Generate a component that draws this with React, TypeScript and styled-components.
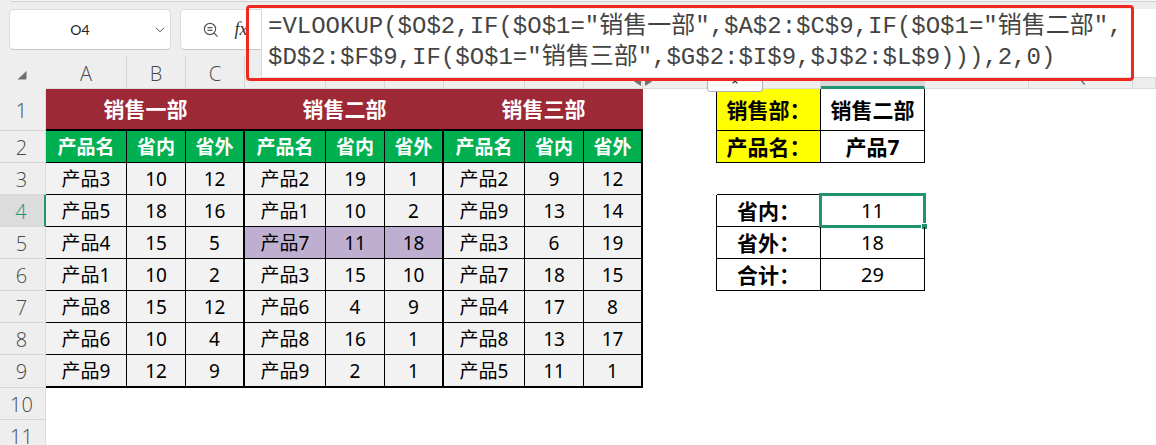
import React from "react";
import styled, { createGlobalStyle, css } from "styled-components";

const GlobalStyle = createGlobalStyle`
  *, *::before, *::after { box-sizing: border-box; }
  body {
    margin: 0;
    background: #ffffff;
    font-family: "Noto Sans", "Noto Sans CJK SC", sans-serif;
    color: #000000;
  }
`;

const chrome = "#eeeeee";
const accent = "#1f9470";

const Workbook = styled.main`
  position: relative;
  height: 100vh;
  overflow: hidden;
`;

const Toolbar = styled.header`
  display: flex;
  flex-direction: column;
  gap: 7px;
  height: 56px;
  background: ${chrome};
`;

const RibbonEdge = styled.div`
  flex: none;
  height: 2px;
  margin-left: 10px;
  background: #f6f6f6;
  border-bottom: 1px solid #cfcfcf;
  border-bottom-left-radius: 4px;
`;

const FormulaRow = styled.div`
  display: flex;
  gap: 9px;
  height: 41px;
  padding-left: 9px;
`;

const Box = styled.div<{ $grow?: boolean }>`
  display: flex;
  align-items: center;
  min-width: 0;
  flex: ${(p) => (p.$grow ? "1" : "0 0 162px")};
  background: #ffffff;
  border: 1px solid #dcdcdc;
  border-bottom-color: #c4c4c4;
  border-radius: ${(p) => (p.$grow ? "5px 0 0 5px" : "5px")};
`;

const NameInput = styled.input`
  flex: 1;
  min-width: 0;
  padding: 0;
  border: 0;
  outline: 0;
  background: transparent;
  text-align: center;
  font: 14px Lato, sans-serif;
  color: #222222;
`;

const IconButton = styled.button`
  display: flex;
  flex: none;
  align-items: center;
  justify-content: center;
  width: 20px;
  height: 20px;
  padding: 0;
  border: 0;
  background: transparent;
  color: #555555;
`;

const FormulaTools = styled.div`
  display: flex;
  gap: 10px;
  padding-left: 20px;
`;

const FxButton = styled(IconButton)`
  font: italic 18px "Liberation Serif", serif;
  color: #333333;
`;

const Editor = styled.div`
  position: absolute;
  z-index: 2;
  top: 9px;
  left: 261px;
  right: 0;
  height: 69px;
  background: #ffffff;
  border-left: 1px solid #d8d8d8;
  border-bottom: 1px solid #d8d8d8;
`;

const FormulaInput = styled.textarea`
  display: block;
  width: 100%;
  height: 68px;
  padding: 2px 0 0 6px;
  border: 0;
  outline: 0;
  resize: none;
  overflow: hidden;
  white-space: pre;
  background: transparent;
  font: 24px/31px "Liberation Mono", "Noto Sans CJK SC", monospace;
  color: #444444;
`;

const Highlight = styled.div`
  position: absolute;
  z-index: 3;
  top: 5px;
  left: 246px;
  width: 888px;
  height: 76px;
  border: 3px solid #ee2a20;
  border-radius: 4px;
  pointer-events: none;
`;

const CollapseTab = styled.button`
  position: absolute;
  z-index: 1;
  top: 72px;
  left: 707px;
  width: 56px;
  height: 20px;
  padding: 7px 0 0;
  display: flex;
  justify-content: center;
  border: 1px solid #b0b0b8;
  border-radius: 3px;
  background: #fafafa;
  color: #333333;
`;

const HiddenMark = styled.svg`
  position: absolute;
  top: 20px;
  right: -10px;
  z-index: 1;
`;

const Sheet = styled.table`
  width: 100%;
  min-width: 1134px;
  table-layout: fixed;
  border-collapse: separate;
  border-spacing: 0;
`;

const Col = styled.col<{ $w?: number }>`
  width: ${(p) => (p.$w ? `${p.$w}px` : "auto")};
`;

const Row = styled.tr<{ $h: number }>`
  height: ${(p) => p.$h}px;
`;

const headText = css`
  font-family: "Open Sans", sans-serif;
  font-weight: 300;
  font-size: 20px;
  line-height: 24px;
  color: #484848;
`;

const ColHead = styled.th<{ $active?: boolean }>`
  ${headText}
  position: relative;
  padding: 4px 0 0;
  background: ${(p) => (p.$active ? "#d9d9d9" : chrome)};
  border-right: 1px solid #d6d6d6;
  border-bottom: ${(p) => (p.$active ? `3px solid ${accent}` : "1px solid #dcdcdc")};
`;

const Corner = styled.th`
  padding: 0;
  background: ${chrome};
`;

const CornerMark = styled.svg`
  display: block;
  margin: 4px 0 0 17px;
`;

const RowHead = styled.th<{ $active?: boolean }>`
  ${headText}
  padding: 2px 2px 0 0;
  background: ${(p) => (p.$active ? "#dcdcdc" : chrome)};
  color: ${(p) => (p.$active ? accent : "#484848")};
  border-right: ${(p) => (p.$active ? `2px solid ${accent}` : "1px solid #dcdcdc")};
  border-bottom: 1px solid #d6d6d6;
`;

type Tone = "title" | "head" | "data" | "marked" | "label" | "key" | "value" | "blank";

const tones = {
  title: css`background: #9d2836; color: #ffffff; font-weight: 700; font-size: 21px;`,
  head: css`background: #00b050; color: #ffffff; font-weight: 700;`,
  data: css`background: #f2f2f2;`,
  marked: css`background: #beafd0;`,
  label: css`background: #ffff00; font-weight: 700; font-size: 21px;`,
  key: css`font-weight: 700; font-size: 21px;`,
  value: css`font-size: 20px;`,
  blank: css``,
};

const Cell = styled.td<{ $tone: Tone; $right?: number; $bottom?: number }>`
  position: relative;
  padding: 0;
  text-align: center;
  white-space: nowrap;
  font-size: 19px;
  line-height: 24px;
  border: 0 solid #000000;
  border-right-width: ${(p) => p.$right ?? 0}px;
  border-bottom-width: ${(p) => p.$bottom ?? 0}px;
  ${(p) => tones[p.$tone]}
`;

const Selection = styled.span`
  position: absolute;
  inset: -2px;
  border: 3px solid ${accent};

  &::after {
    content: "";
    position: absolute;
    right: -4px;
    bottom: -4px;
    width: 6px;
    height: 6px;
    background: ${accent};
    border: solid #ffffff;
    border-width: 1px 0 0 1px;
  }
`;

const widths = [46, 81, 59, 59, 81, 59, 59, 81, 59, 59, 74, 104, 104, 104, 104];
const letters = ["A", "B", "C", "D", "E", "F", "G", "H", "I", "M", "N", "O", "P", "Q", ""];
const departments = ["销售一部", "销售二部", "销售三部"];

const products: [number, number, number][][] = [
  [[3, 10, 12], [2, 19, 1], [2, 9, 12]],
  [[5, 18, 16], [1, 10, 2], [9, 13, 14]],
  [[4, 15, 5], [7, 11, 18], [3, 6, 19]],
  [[1, 10, 2], [3, 15, 10], [7, 18, 15]],
  [[8, 15, 12], [6, 4, 9], [4, 17, 8]],
  [[6, 10, 4], [8, 16, 1], [8, 13, 17]],
  [[9, 12, 9], [9, 2, 1], [5, 11, 1]],
];

const side: Record<number, { tone: Tone; label: string; value: string }> = {
  1: { tone: "label", label: "销售部：", value: "销售二部" },
  2: { tone: "label", label: "产品名：", value: "产品7" },
  4: { tone: "key", label: "省内：", value: "11" },
  5: { tone: "key", label: "省外：", value: "18" },
  6: { tone: "key", label: "合计：", value: "29" },
};

const formula =
  '=VLOOKUP($O$2,IF($O$1="销售一部",$A$2:$C$9,IF($O$1="销售二部",\n' +
  '$D$2:$F$9,IF($O$1="销售三部",$G$2:$I$9,$J$2:$L$9))),2,0)';

function SideCells({ row }: { row: number }) {
  const entry = side[row];
  if (!entry) {
    const line = row === 3 ? 1 : 0;
    return (
      <>
        <Cell $tone="blank" />
        <Cell $tone="blank" $bottom={line} />
        <Cell $tone="blank" $bottom={line} />
        <Cell $tone="blank" colSpan={3} />
      </>
    );
  }
  return (
    <>
      <Cell $tone="blank" $right={1} />
      <Cell $tone={entry.tone} $right={1} $bottom={1}>{entry.label}</Cell>
      <Cell $tone={row < 3 ? "key" : "value"} $right={1} $bottom={1}>
        {entry.value}
        {row === 4 && <Selection />}
      </Cell>
      <Cell $tone="blank" colSpan={3} />
    </>
  );
}

export default function App() {
  return (
    <Workbook>
      <GlobalStyle />
      <Toolbar>
        <RibbonEdge />
        <FormulaRow>
          <Box>
            <NameInput aria-label="名称框" defaultValue="O4" />
            <IconButton aria-label="展开名称列表">
              <svg width="10" height="6" viewBox="0 0 10 6" fill="none" stroke="currentColor">
                <path d="M1 .8 5 4.8 9 .8" />
              </svg>
            </IconButton>
          </Box>
          <Box $grow>
            <FormulaTools>
              <IconButton aria-label="查看公式">
                <svg width="16" height="16" viewBox="0 0 16 16" fill="none" stroke="currentColor" strokeWidth="1.2">
                  <circle cx="7" cy="7" r="5.6" />
                  <path d="M4.5 5.7h5M4.5 8.3h5M11 11l3.6 3.6" />
                </svg>
              </IconButton>
              <FxButton aria-label="插入函数">fx</FxButton>
            </FormulaTools>
          </Box>
        </FormulaRow>
      </Toolbar>

      <Editor>
        <FormulaInput aria-label="编辑栏" spellCheck={false} defaultValue={formula} />
      </Editor>
      <CollapseTab aria-label="折叠编辑栏">
        <svg width="6" height="4" viewBox="0 0 6 4" fill="none" stroke="currentColor" strokeWidth="1.3">
          <path d="M.6 3.4 3 1l2.4 2.4" />
        </svg>
      </CollapseTab>
      <Highlight />

      <Sheet>
        <colgroup>
          {widths.map((w, i) => <Col key={i} $w={w} />)}
          <Col />
        </colgroup>
        <thead>
          <Row $h={33}>
            <Corner aria-label="全选">
              <CornerMark width="10" height="10" viewBox="0 0 10 10">
                <path d="M9.5 1v7.5q0 1-1 1H.5Z" fill="#707070" />
              </CornerMark>
            </Corner>
            {letters.map((letter, i) => (
              <ColHead key={i} scope="col" $active={letter === "O"}>
                {letter}
                {letter === "I" && (
                  <HiddenMark width="18" height="12" viewBox="0 0 18 12" fill="#707070">
                    <path d="M7 1v9L0 5.5ZM11 1v9l7-4.5Z" />
                  </HiddenMark>
                )}
              </ColHead>
            ))}
          </Row>
        </thead>
        <tbody>
          <Row $h={42}>
            <RowHead scope="row">1</RowHead>
            {departments.map((name) => (
              <Cell key={name} $tone="title" $bottom={2} colSpan={3}>{name}</Cell>
            ))}
            <SideCells row={1} />
          </Row>
          <Row $h={32}>
            <RowHead scope="row">2</RowHead>
            {departments.map((name) => (
              <React.Fragment key={name}>
                <Cell $tone="head" $right={1} $bottom={1}>产品名</Cell>
                <Cell $tone="head" $right={1} $bottom={1}>省内</Cell>
                <Cell $tone="head" $right={2} $bottom={1}>省外</Cell>
              </React.Fragment>
            ))}
            <SideCells row={2} />
          </Row>
          {products.map((groups, i) => {
            const row = i + 3;
            const line = row === 9 ? 2 : 1;
            return (
              <Row key={row} $h={row === 9 ? 33 : 32}>
                <RowHead scope="row" $active={row === 4}>{row}</RowHead>
                {groups.map(([id, inner, outer], g) => {
                  const tone: Tone = row === 5 && g === 1 ? "marked" : "data";
                  return (
                    <React.Fragment key={g}>
                      <Cell $tone={tone} $right={1} $bottom={line}>{`产品${id}`}</Cell>
                      <Cell $tone={tone} $right={1} $bottom={line}>{inner}</Cell>
                      <Cell $tone={tone} $right={2} $bottom={line}>{outer}</Cell>
                    </React.Fragment>
                  );
                })}
                <SideCells row={row} />
              </Row>
            );
          })}
          {[10, 11].map((row) => (
            <Row key={row} $h={32}>
              <RowHead scope="row">{row}</RowHead>
              <Cell $tone="blank" colSpan={15} />
            </Row>
          ))}
        </tbody>
      </Sheet>
    </Workbook>
  );
}
